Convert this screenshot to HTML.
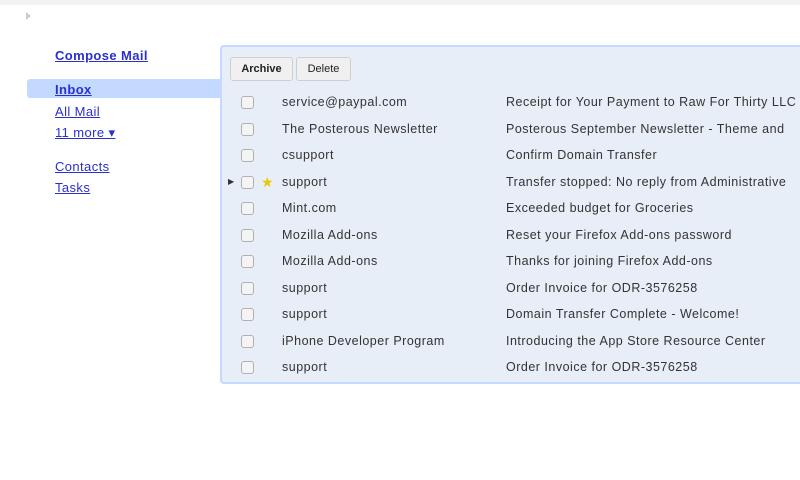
<!DOCTYPE html>
<html><head><style>
body{margin:0;width:800px;height:480px;overflow:hidden;background:#fff;font-family:"Liberation Sans",Arial,sans-serif;position:relative}
.top{position:absolute;left:0;top:0;width:800px;height:5px;background:#f2f2f2}
.lg{position:absolute;left:0;top:0;width:19px;height:480px;background:#fbfbfb}
.tri{position:absolute;left:26px;top:12px;width:0;height:0;border-left:5px solid #ccc;border-top:4px solid transparent;border-bottom:4px solid transparent}
a{color:#2a2fd0;text-decoration:underline;font-size:13px;letter-spacing:.4px;position:absolute;left:55px}
.inbox{position:absolute;left:27px;top:79px;width:195px;height:19px;background:#c3d9ff;border-radius:3px 0 0 3px}
.panel{position:absolute;left:220px;top:45px;width:600px;height:335px;background:#e8eef7;border:2px solid #c3d9ff;border-radius:4px}
.btn{position:absolute;top:10px;height:22px;background:#f0f0f0;border:1px solid #cfcfcf;border-radius:3px;font-size:11px;line-height:22px;text-align:center;color:#222}
.row{position:absolute;left:0;width:100%;height:26.5px;font-size:12.5px;letter-spacing:.5px;color:#333;line-height:26.5px;white-space:nowrap}
.cb{position:absolute;left:19px;top:7px;width:11px;height:11px;border:1.5px solid #b0b0b0;border-radius:3px;background:#f4f4f4}
.f{position:absolute;left:60px}.s{position:absolute;left:284px;white-space:nowrap}
</style></head><body>
<div class="top"></div>
<div class="tri"></div>
<div class="inbox"></div>
<a style="top:48px;font-weight:bold">Compose Mail</a>
<a style="top:82px;font-weight:bold">Inbox</a>
<a style="top:104px">All Mail</a>
<a style="top:125px">11 more ▾</a>
<a style="top:159px">Contacts</a>
<a style="top:180px">Tasks</a>
<div class="panel">
<div class="btn" style="left:8px;width:61px;font-weight:bold">Archive</div><div class="btn" style="left:74px;width:53px">Delete</div>
<div class="row" style="top:42px"><div class="cb"></div><span class="f">service@paypal.com</span><span class="s">Receipt for Your Payment to Raw For Thirty LLC</span></div>
<div class="row" style="top:68.5px"><div class="cb"></div><span class="f">The Posterous Newsletter</span><span class="s">Posterous September Newsletter - Theme and</span></div>
<div class="row" style="top:95px"><div class="cb"></div><span class="f">csupport</span><span class="s">Confirm Domain Transfer</span></div>
<div class="row" style="top:121.5px"><span style="position:absolute;left:6px;font-size:8px">▶</span><div class="cb"></div><span style="position:absolute;left:39px;color:#e8c800;font-size:14px">★</span><span class="f">support</span><span class="s">Transfer stopped: No reply from Administrative</span></div>
<div class="row" style="top:148px"><div class="cb"></div><span class="f">Mint.com</span><span class="s">Exceeded budget for Groceries</span></div>
<div class="row" style="top:174.5px"><div class="cb"></div><span class="f">Mozilla Add-ons</span><span class="s">Reset your Firefox Add-ons password</span></div>
<div class="row" style="top:201px"><div class="cb"></div><span class="f">Mozilla Add-ons</span><span class="s">Thanks for joining Firefox Add-ons</span></div>
<div class="row" style="top:227.5px"><div class="cb"></div><span class="f">support</span><span class="s">Order Invoice for ODR-3576258</span></div>
<div class="row" style="top:254px"><div class="cb"></div><span class="f">support</span><span class="s">Domain Transfer Complete - Welcome!</span></div>
<div class="row" style="top:280.5px"><div class="cb"></div><span class="f">iPhone Developer Program</span><span class="s">Introducing the App Store Resource Center</span></div>
<div class="row" style="top:307px"><div class="cb"></div><span class="f">support</span><span class="s">Order Invoice for ODR-3576258</span></div>
</div>
</body></html>
